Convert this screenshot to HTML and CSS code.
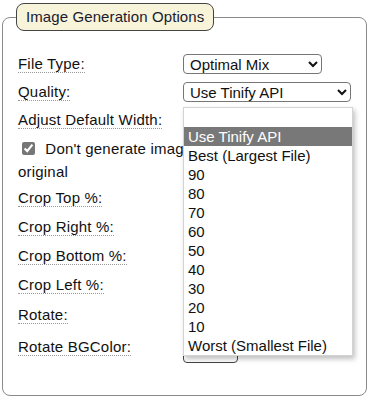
FILE: index.html
```html
<!DOCTYPE html>
<html lang="en">
<head>
  <meta charset="UTF-8">
  <title>Image Generation Options</title>
  <link rel="stylesheet" href="styles.css">
</head>
<body>

<fieldset class="options">
  <legend class="options-title">Image Generation Options</legend>

  <div class="row">
    <span class="label">File Type:</span>
    <select class="field-select field-type">
      <option>Optimal Mix</option>
    </select>
  </div>

  <div class="row">
    <span class="label">Quality:</span>
    <div class="field">
      <select class="field-select field-quality">
        <option>Use Tinify API</option>
      </select>
      <ul class="dropdown">
        <li class="dropdown-item">&nbsp;</li>
        <li class="dropdown-item selected">Use Tinify API</li>
        <li class="dropdown-item">Best (Largest File)</li>
        <li class="dropdown-item">90</li>
        <li class="dropdown-item">80</li>
        <li class="dropdown-item">70</li>
        <li class="dropdown-item">60</li>
        <li class="dropdown-item">50</li>
        <li class="dropdown-item">40</li>
        <li class="dropdown-item">30</li>
        <li class="dropdown-item">20</li>
        <li class="dropdown-item">10</li>
        <li class="dropdown-item">Worst (Smallest File)</li>
      </ul>
    </div>
  </div>

  <div class="row">
    <span class="label">Adjust Default Width:</span>
    <input class="field-text" type="text" value="">
  </div>

  <label class="check-row">
    <input type="checkbox" class="check" checked>
    Don't generate images larger than the original
  </label>

  <div class="row row-crop">
    <span class="label">Crop Top %:</span>
    <input class="field-text" type="text" value="0">
  </div>

  <div class="row row-crop">
    <span class="label">Crop Right %:</span>
    <input class="field-text" type="text" value="0">
  </div>

  <div class="row row-crop">
    <span class="label">Crop Bottom %:</span>
    <input class="field-text" type="text" value="0">
  </div>

  <div class="row row-crop">
    <span class="label">Crop Left %:</span>
    <input class="field-text" type="text" value="0">
  </div>

  <div class="row row-rotate">
    <span class="label">Rotate:</span>
    <input class="field-text" type="text" value="0">
  </div>

  <div class="row row-color">
    <span class="label">Rotate BGColor:</span>
    <button class="field-color" type="button"></button>
  </div>
</fieldset>

</body>
</html>
```

FILE: styles.css
```css
body {
  font-family: "Liberation Sans", Arial, sans-serif;
  font-size: 15px;
  color: #111;
  background-color: #fff;
  margin: 0;
  padding: 3px 4px 5px 2px;
}
.options {
  border: 1px solid #8a8a8a;
  border-radius: 8px;
  margin: 0;
  padding: 19px 15px 0;
  height: 393px;
  box-sizing: border-box;
}
.options-title {
  background-color: #f7f4da;
  border: 1px solid #444;
  border-radius: 8px;
  padding: 0 9px;
  margin-left: -2px;
  line-height: 26px;
  letter-spacing: 0.1px;
  color: #1a1a2e;
}
.row {
  display: grid;
  grid-template-columns: 165px 1fr;
  align-items: center;
  height: 28px;
}
.row-crop {
  height: 29px;
}
.row-rotate {
  height: 32px;
}
.row-color {
  height: 30px;
}
.label {
  justify-self: start;
  line-height: 17px;
  letter-spacing: 0.2px;
  border-bottom: 1px dotted #999;
}
.field {
  position: relative;
  height: 20px;
}
.field-select {
  font: inherit;
  height: 20px;
  padding: 0 2px;
  border: 1px solid #767676;
  border-radius: 4px;
  background-color: #fff;
  color: #111;
}
.field-type {
  width: 139px;
}
.field-quality {
  width: 168px;
}
.field-text {
  width: 160px;
  font: inherit;
  height: 22px;
  box-sizing: border-box;
}
.field-color {
  width: 55px;
  height: 28px;
  margin-top: 4px;
  border: 1px solid #444;
  border-radius: 4px;
  background-color: #fff;
}
.check-row {
  display: block;
  line-height: 23px;
  padding-top: 3px;
  margin-right: 30px;
  letter-spacing: 0.2px;
}
.check {
  margin: 0 6px 0 4px;
  width: 13px;
  height: 13px;
  vertical-align: -1px;
  accent-color: #767676;
}
.dropdown {
  position: absolute;
  top: 25px;
  left: 0;
  width: 168px;
  margin: 0;
  padding: 0;
  list-style: none;
  background-color: #fff;
  border: 1px solid #d4d4d4;
  box-shadow: 2px 3px 5px rgba(0, 0, 0, 0.25);
  z-index: 2;
  letter-spacing: 0;
}
.dropdown-item {
  height: 19px;
  line-height: 19px;
  padding: 0 4px;
  white-space: nowrap;
}
.dropdown-item.selected {
  background-color: #787878;
  color: #fff;
}
```
